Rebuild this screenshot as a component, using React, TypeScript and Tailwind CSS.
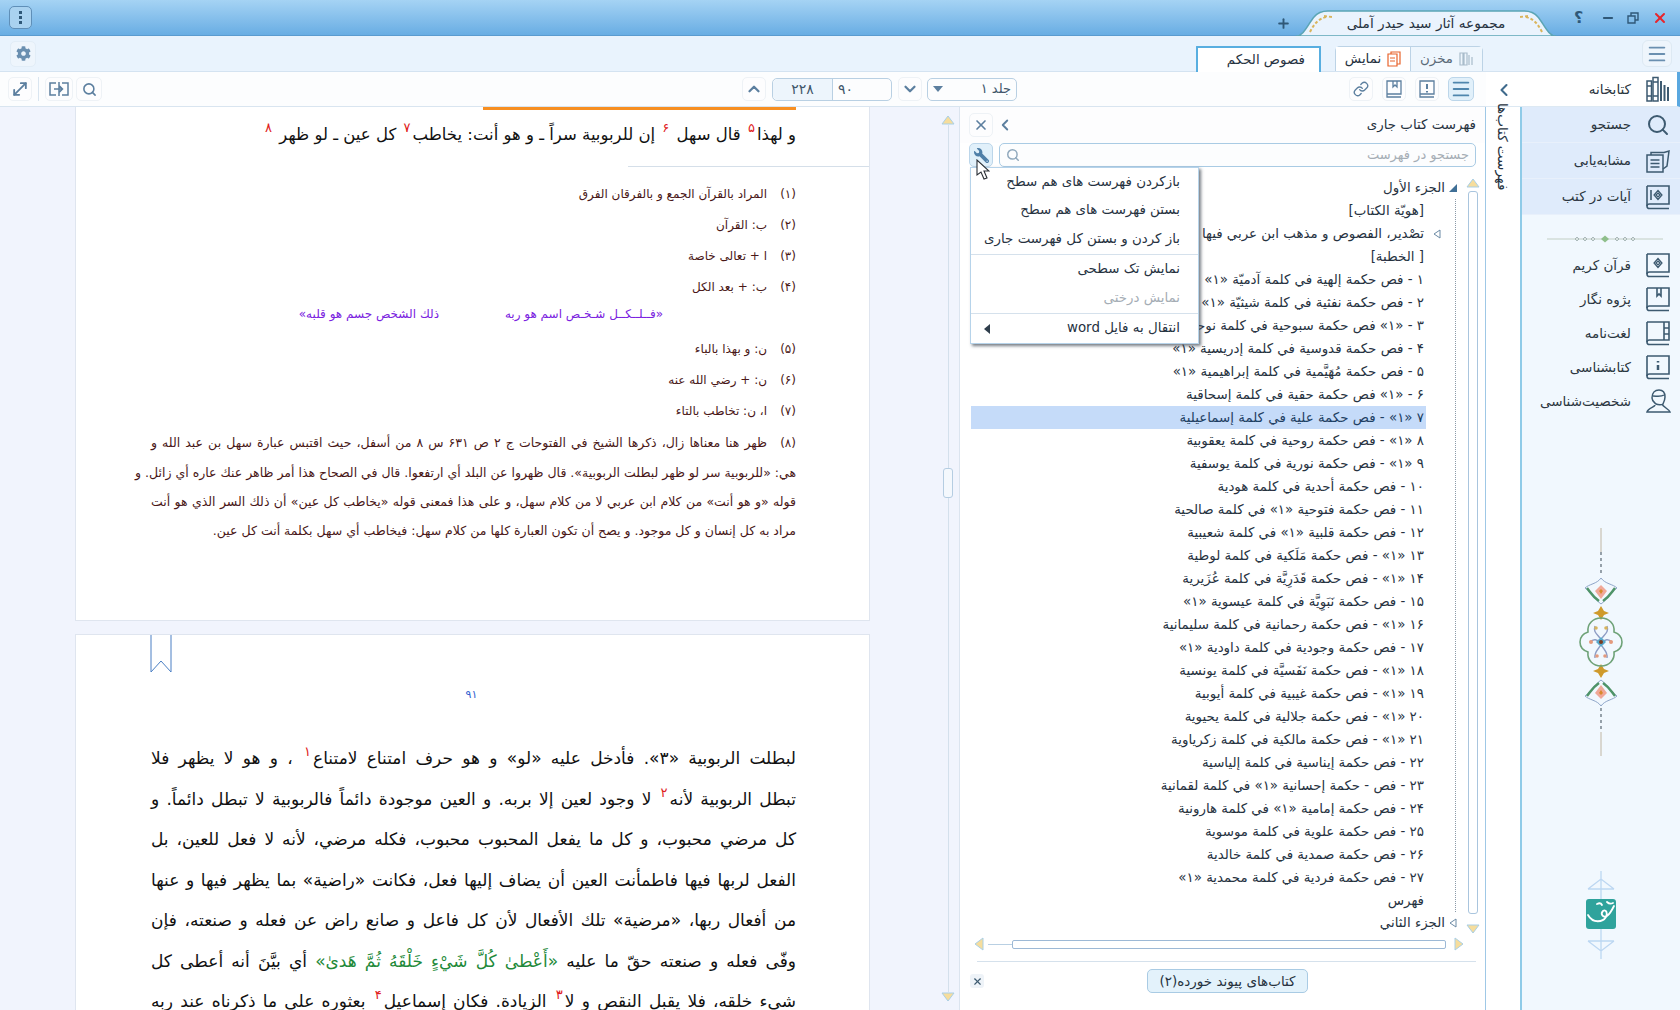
import * as React from "react";
import { ChevronLeft, ChevronUp, ChevronDown, Search, MoveDiagonal, Link, X, Plus, Menu, Minus } from "lucide-react";
import { FaCog, FaWrench } from "react-icons/fa";

const INK = "#5c7f9f";
const NAV = "#3d5a70";

const tree = [
  "۱ - فص حكمة إلهية في كلمة آدميّة «۱»",
  "۲ - فص حكمة نفثية في كلمة شيثيّة «۱»",
  "۳ - «۱» فص حكمة سبوحية في كلمة نوحية",
  "۴ - فص حكمة قدوسية في كلمة إدريسية «۱»",
  "۵ - فص حكمة مُهَيَّمية في كلمة إبراهيمية «۱»",
  "۶ - «۱» فص حكمة حقية في كلمة إسحاقية",
  "۷ «۱» - فص حكمة علية في كلمة إسماعيلية",
  "۸ «۱» - فص حكمة روحية في كلمة يعقوبية",
  "۹ «۱» - فص حكمة نورية في كلمة يوسفية",
  "۱۰ - فص حكمة أحدية في كلمة هودية",
  "۱۱ - فص حكمة فتوحية «۱» في كلمة صالحية",
  "۱۲ - فص حكمة قلبية «۱» في كلمة شعيبية",
  "۱۳ «۱» - فص حكمة مَلَكية في كلمة لوطية",
  "۱۴ «۱» - فص حكمة قَدَرِيَّة في كلمة عُزَيرية",
  "۱۵ - فص حكمة نَبَوِيَّة في كلمة عيسوية «۱»",
  "۱۶ «۱» - فص حكمة رحمانية في كلمة سليمانية",
  "۱۷ - فص حكمة وجودية في كلمة داودية «۱»",
  "۱۸ «۱» - فص حكمة نَفَسيَّة في كلمة يونسية",
  "۱۹ «۱» - فص حكمة غيبية في كلمة أيوبية",
  "۲۰ «۱» - فص حكمة جلالية في كلمة يحيوية",
  "۲۱ «۱» - فص حكمة مالكية في كلمة زكرياوية",
  "۲۲ - فص حكمة إيناسية في كلمة إلياسية",
  "۲۳ - فص - حكمة إحسانية «۱» في كلمة لقمانية",
  "۲۴ - فص حكمة إمامية «۱» في كلمة هارونية",
  "۲۵ - فص حكمة علوية في كلمة موسوية",
  "۲۶ - فص حكمة صمدية في كلمة خالدية",
  "۲۷ - فص حكمة فردية في كلمة محمدية «۱»",
];

const notes = [
  ["(۱)", "المراد بالقرآن الجمع و بالفرقان الفرق"],
  ["(۲)", "ب: القرآن"],
  ["(۳)", "ا + تعالى خاصة"],
  ["(۴)", "ب: + بعد الكل"],
];
const notes2 = [
  ["(۵)", "ن: و بهذا بالباء"],
  ["(۶)", "ن: + رضي الله عنه"],
  ["(۷)", "ا، ن: تخاطب بالتاء"],
];

function Note({ children }: { children: React.ReactNode }) {
  return <sup className="text-[13px] text-[#e02020] mx-[2px] top-[-8px]">{children}</sup>;
}

function IconBtn({ children, active, className = "" }: { children: React.ReactNode; active?: boolean; className?: string }) {
  return (
    <div
      className={`flex h-[24px] w-[24px] items-center justify-center rounded-[5px] border ${
        active ? "border-[#bcd6ea] bg-[#e1f0fa]" : "border-[#eef2f6] bg-[#fdfdfe]"
      } ${className}`}
    >
      {children}
    </div>
  );
}

function Arrow({ dir, className = "" }: { dir: "up" | "down" | "left" | "right"; className?: string }) {
  const rot = { up: 0, down: 180, left: 270, right: 90 }[dir];
  return (
    <svg width="14" height="10" viewBox="0 0 14 10" className={className} style={{ transform: `rotate(${rot}deg)` }}>
      <path d="M7 1 13 9H1z" fill="#f6dd9c" stroke="#a9cfe6" strokeWidth="1" />
    </svg>
  );
}

function Book({ children, size = 26 }: { children?: React.ReactNode; size?: number }) {
  return (
    <svg width={size} height={size} viewBox="0 0 26 26" fill="none" stroke={NAV} strokeWidth="1.6">
      <path d="M2 2h22v18H4.500C3 20 2 21 2 22.200S3 24.500 4.500 24.500H24" />
      <path d="M2 2v20" />
      {children}
    </svg>
  );
}

function LibraryIcon({ size = 26 }: { size?: number }) {
  return (
    <svg width={size} height={size} viewBox="0 0 26 26" fill="none" stroke={NAV} strokeWidth="1.5">
      <rect x="2" y="5" width="4.500" height="20" />
      <rect x="8" y="1.500" width="5" height="23.500" />
      <path d="M2 10h4.500M8 6h5M8 20h5M2 20h4.500" />
      <path d="M16 5v20M19.500 9v16M23 11v14" strokeWidth="2" />
    </svg>
  );
}

function DocsIcon() {
  return (
    <svg width="26" height="26" viewBox="0 0 26 26" fill="none" stroke={NAV} strokeWidth="1.5">
      <path d="M2 7h16v17H2z" />
      <path d="M6 7V4.500h13L24 3l-2 15-4 3" />
      <path d="M5.500 12h9M5.500 15.500h9M5.500 19h9" />
    </svg>
  );
}

function PersonIcon() {
  return (
    <svg width="26" height="26" viewBox="0 0 26 26" fill="none" stroke={NAV} strokeWidth="1.5">
      <path d="M7 10c0-5 3-8 7-8s6 3 6 7c0 2-1 5-2 7-1 1-5 1-7 0-2-2-4-3-4-6z" />
      <path d="M8 8c4 0 8 1 11-1" />
      <path d="M10 17c0 2-7 3-8 7h23c-1-3-7-5-8-8" />
    </svg>
  );
}

function Diamond() {
  return <path d="M13 6.500 17 11l-4 4.500L9 11z M13 9l2 2-2 2-2-2z" strokeWidth="1.2" />;
}

function NavRow({ label, icon, shaded }: { label: string; icon: React.ReactNode; shaded?: boolean }) {
  return (
    <div className={`flex items-center justify-end ${shaded ? "h-[36px] bg-[#dfebfb] border-b border-[#e8f0fb]" : "h-[34px]"}`}>
      <span dir="rtl" className="text-[13.500px] text-[#2b3640] whitespace-nowrap">
        {label}
      </span>
      <div className="ml-[14px] mr-[9px] flex w-[26px] justify-center">{icon}</div>
    </div>
  );
}

function HOrnament() {
  return (
    <svg width="116" height="10" viewBox="0 0 116 10">
      <path d="M0 5h116" stroke="#c2cfc4" strokeWidth="1" />
      <path d="M58 1.500 62 5l-4 3.500L54 5z" fill="#8fbf8c" />
      {[30, 38, 46, 70, 78, 86].map((x) => (
        <path key={x} d={`M${x} 3 ${x + 2} 5 ${x} 7 ${x - 2} 5z`} fill="none" stroke="#9aa" strokeWidth=".8" />
      ))}
    </svg>
  );
}

function VOrnament() {
  const Flower = ({ y, flip }: { y: number; flip?: boolean }) => (
    <g transform={`translate(23 ${y}) scale(1 ${flip ? -1 : 1})`}>
      <path d="M0-16 C4-10 12-10 16-6 C10-2 8 4 0 10 C-8 4 -10-2 -16-6 C-12-10 -4-10 0-16z" fill="none" stroke="#8fa6c9" strokeWidth="1" />
      <path d="M-14-6c4 5 6 9 12 13M14-6c-4 5-6 9-12 13" fill="none" stroke="#4f9468" strokeWidth="2.500" />
      <path d="M0-9 6-3 0 5-6-3z" fill="#f0a898" />
      <path d="M0-5 2-3 0 0-2-3z" fill="#d98a2b" />
    </g>
  );
  return (
    <svg width="46" height="228" viewBox="0 0 46 228">
      <path d="M23 0v24M23 204v24" stroke="#b5a48e" strokeWidth=".8" />
      <path d="M23 24v24M23 180v24" stroke="#6f7c86" strokeWidth="1.400" strokeDasharray="3 3" />
      <Flower y={66} />
      <Flower y={162} flip />
      <path d="M23 78l3 5 5 2-5 2-3 5-3-5-5-2 5-2zM23 136l3 5 5 2-5 2-3 5-3-5-5-2 5-2z" fill="#cf9a2b" />
      <path d="M23 90c8 0 14 6 13 14 6 2 8 6 8 10s-2 8-8 10c1 8-5 14-13 14s-14-6-13-14c-6-2-8-6-8-10s2-8 8-10c-1-8 5-14 13-14z" fill="none" stroke="#6ea277" strokeWidth="1.600" />
      <path d="M17 98c-2 6 2 8 5 12M29 98c2 6-2 8-5 12M12 114c4-4 7-2 10 0M34 114c-4-4-7-2-10 0M17 130c-1-6 3-8 5-12M29 130c1-6-3-8-5-12" fill="none" stroke="#8d9cc4" strokeWidth="1.400" />
      <path d="M23 109l5 5-5 5-5-5z" fill="#58a9cc" />
      <circle cx="23" cy="114" r="2" fill="#7a3b20" />
      <circle cx="13" cy="114" r="2" fill="#e49a7c" />
      <circle cx="33" cy="114" r="2" fill="#e49a7c" />
      <circle cx="18" cy="100" r="1.800" fill="#d8b45c" />
      <circle cx="28" cy="100" r="1.800" fill="#d8b45c" />
      <circle cx="19" cy="128" r="1.800" fill="#e49a7c" />
      <circle cx="27" cy="128" r="1.800" fill="#e49a7c" />
    </svg>
  );
}

function Logo() {
  return (
    <svg width="46" height="92" viewBox="0 0 46 92">
      <path d="M23 2v88M10 20l13-10 13 10M10 72l13 10 13-10M10 20h26M10 72h26" fill="none" stroke="#bcd7f2" strokeWidth="1.300" />
      <rect x="8" y="30" width="30" height="30" rx="3" fill="#2fa39c" />
      <path d="M10 46c5 9 15 7 18 2 2-4 0-8-3-6-3 3 0 7 4 5 3-2 5-6 7-10M19 35c2-1 4-1 5 1M29 33c2 2 4 2 6 1" fill="none" stroke="#fff" strokeWidth="1.800" strokeLinecap="round" />
    </svg>
  );
}

function TitleTab() {
  return (
    <div className="relative flex h-[26px] w-[260px] items-center justify-center">
      <svg width="260" height="26" viewBox="0 0 260 26" className="absolute inset-0">
        <path d="M0 26C8 26 12 14 18 7 22 2 26 1 32 1H228c6 0 10 1 14 6 6 7 10 19 18 19z" fill="#eaf3fd" stroke="#5ba5b5" strokeWidth="1.500" />
        <path d="M14 22c4-8 8-13 16-15M28 6l8 1M246 22c-4-8-8-13-16-15M232 6l-8 1" fill="none" stroke="#d9b45c" strokeWidth="2" strokeDasharray="3 2" />
      </svg>
      <span dir="rtl" className="relative text-[13.700px] text-[#26323f]">
        مجموعه آثار سید حیدر آملی
      </span>
    </div>
  );
}

function TitleBar() {
  return (
    <div className="flex h-[36px] shrink-0 items-center bg-gradient-to-b from-[#a5d3f4] to-[#68ade3] border-b border-[#5a9bcf]">
      <div className="ml-[9px] flex h-[23px] w-[23px] flex-col items-center justify-center gap-[2px] rounded-[5px] border border-[#5f8fb8] bg-[#a9d2f0]">
        <span className="h-[3px] w-[3px] bg-[#2f5878]" />
        <span className="h-[3px] w-[3px] bg-[#2f5878]" />
        <span className="h-[3px] w-[3px] bg-[#2f5878]" />
      </div>
      <div className="flex flex-1 items-end justify-end self-end">
        <Plus size={15} strokeWidth={3} className="mb-[4px] mr-[5px] text-[#2f5878]" />
      </div>
      <div className="self-end mb-[-1px]">
        <TitleTab />
      </div>
      <div className="flex w-[124px] items-center text-[#2f5878] pl-[18px]">
        <span className="w-[27px] text-[16px] font-bold">؟</span>
        <Minus size={14} strokeWidth={3.500} className="mr-[12px]" />
        <svg width="12" height="12" viewBox="0 0 12 12" fill="none" stroke="#2f5878" strokeWidth="1.400" className="mr-[13px]">
          <path d="M1 4h7v7H1zM4 4V1h7v7H8" />
        </svg>
        <X size={16} strokeWidth={3} className="text-[#e8252c]" />
      </div>
    </div>
  );
}

function TabsRow() {
  return (
    <div className="flex h-[36px] shrink-0 items-end bg-[#e9f3fd] border-b border-[#d4e3f1]">
      <div className="flex h-full items-center pl-[10px]">
        <div className="flex h-[26px] w-[26px] items-center justify-center rounded-[5px] border border-[#e2edf7] bg-[#eef5fc]">
          <FaCog size={15} className="text-[#6a8fb0]" />
        </div>
      </div>
      <div className="flex flex-1 justify-end mb-[-1px]">
        <div dir="rtl" className="flex h-[26px] w-[125px] items-center rounded-t-[1px] border-x-2 border-t-2 border-[#58aee0] bg-white pr-[14px] text-[13.400px] text-[#26323f]">
          فصوص الحکم
        </div>
        <div className="ml-[14px] flex h-[25px] w-[148px] rounded-t-[5px] border border-b-0 border-[#bcd3e6] text-[13.400px]">
          <div className="flex w-[74px] items-center justify-center gap-[6px] bg-white">
            <span dir="rtl" className="text-[#26323f]">نمایش</span>
            <svg width="14" height="16" viewBox="0 0 14 16" fill="none" stroke="#e8632b" strokeWidth="1.200">
              <path d="M1 3h9v12H1zM4 3V1h9v12h-3M3 7h5M3 10h5" />
            </svg>
          </div>
          <div className="flex flex-1 items-center justify-center gap-[6px] border-l border-[#bcd3e6] bg-[#eef6fd]">
            <span dir="rtl" className="text-[#5a6a78]">مخزن</span>
            <svg width="14" height="14" viewBox="0 0 14 14" fill="none" stroke="#a9bccb" strokeWidth="1.200">
              <path d="M1 1h3v12H1zM5 1h3v12H5zM10 3v10M13 5v8" />
            </svg>
          </div>
        </div>
        <div className="w-[159px]" />
      </div>
      <div className="flex h-full items-center pr-[8px]">
        <div className="flex h-[27px] w-[30px] items-center justify-center rounded-[6px] border border-[#dde9f3] bg-[#eef5fc]">
          <Menu size={22} strokeWidth={2} className="text-[#6a8fb0]" />
        </div>
      </div>
    </div>
  );
}

function BookTool({ kind, size = 18 }: { kind: "mark" | "bang"; size?: number }) {
  return (
    <svg width={size} height={size} viewBox="0 0 18 18" fill="none" stroke={INK} strokeWidth="1.300">
      <path d="M2 1h14v13H2zM2 14v3h14" />
      {kind === "mark" ? <path d="M8 1v6l2-2 2 2V1" /> : <path d="M9 4v5M9 11v1.500" strokeWidth="2" />}
    </svg>
  );
}

function ToolRow() {
  return (
    <div className="flex h-[35px] w-[1486px] shrink-0 items-center border-b border-[#d9e5f0] bg-[#fcfdfe]">
      <div className="flex items-center pl-[8px]">
        <IconBtn><MoveDiagonal size={20} strokeWidth={2.200} style={{ color: INK }} /></IconBtn>
        <div className="mx-[6px] h-[24px] w-px bg-[#d9e5f0]" />
        <IconBtn className="w-[28px]">
          <svg width="20" height="14" viewBox="0 0 20 14" fill="none" stroke={INK} strokeWidth="1.500">
            <path d="M7 1H1v12h6M13 1h6v12h-6M10 0v14M5 7h8M10.500 4l3 3-3 3" />
          </svg>
        </IconBtn>
        <IconBtn className="ml-[3px] w-[26px]"><Search size={15} strokeWidth={2.500} style={{ color: INK }} /></IconBtn>
      </div>
      <div className="flex-1" />
      <div className="flex items-center">
        <IconBtn><ChevronUp size={18} strokeWidth={3} style={{ color: INK }} /></IconBtn>
        <div className="mx-[6px] flex h-[23px] w-[120px] rounded-[5px] border border-[#b9d0e3] text-[14px] text-[#40566a]">
          <div className="flex w-[60px] items-center justify-center rounded-l-[5px] bg-[#edf5fc] border-r border-[#b9d0e3]">۲۲۸</div>
          <div className="flex flex-1 items-center pl-[5px]">۹۰</div>
        </div>
        <IconBtn><ChevronDown size={18} strokeWidth={3} style={{ color: INK }} /></IconBtn>
        <div className="ml-[5px] flex h-[23px] w-[90px] items-center justify-between rounded-[5px] border border-[#b9d0e3] px-[5px] text-[13px] text-[#40566a]">
          <svg width="10" height="6" viewBox="0 0 10 6"><path d="M0 0h10L5 6z" fill={INK} /></svg>
          <span dir="rtl">جلد ۱</span>
        </div>
      </div>
      <div className="w-[332px]" />
      <div className="flex items-center gap-[9px] pr-[12px]">
        <IconBtn><Link size={16} strokeWidth={2} style={{ color: INK }} /></IconBtn>
        <IconBtn><BookTool kind="mark" /></IconBtn>
        <IconBtn><BookTool kind="bang" /></IconBtn>
        <IconBtn active className="w-[26px]"><Menu size={22} strokeWidth={2} style={{ color: "#4f86ad" }} /></IconBtn>
      </div>
    </div>
  );
}

const bodyLine = "h-[40.500px] leading-[40px] whitespace-nowrap [text-align-last:justify]";

function Reader() {
  return (
    <div className="flex w-[960px] shrink-0 overflow-hidden bg-[#f1f4fd] border-r border-[#dbe4ef]">
      <div className="ml-[75px] flex w-[795px] shrink-0 flex-col">
        <div dir="rtl" className="h-[514px] shrink-0 overflow-hidden border-x border-b border-[#dfe5ef] bg-white">
          <div className="mr-[73px] h-[3px] w-[313px] bg-[#f78f22]" />
          <div className="mr-[73px] flex h-[50px] items-center whitespace-nowrap text-[16.500px] text-[#111]">
            <span>
              و لهذا<Note>۵</Note> قال سهل <Note>۶</Note> إن للربوبية سراً ـ و هو أنت: يخاطب<Note>۷</Note> كل عين ـ لو ظهر <Note>۸</Note>
            </span>
          </div>
          <div className="mt-[6px] mr-0 h-px w-[241px] bg-[#d5dfe9]" />
          <div className="mr-[73px] mt-[11px] text-[12px] text-[#4a1818]">
            {notes.map(([n, t]) => (
              <div key={n} className="flex h-[31px] items-center whitespace-nowrap">
                <span className="w-[29px]">{n}</span>
                <span>{t}</span>
              </div>
            ))}
            <div className="flex h-[23px] items-center whitespace-nowrap pr-[133px] text-[#7a22e0]">
              <span className="w-[156px]">«فــلــكــل شـخـص اسم هو ربه</span>
              <span className="mr-[68px]">ذلك الشخص جسم هو قلبه»</span>
            </div>
            <div className="h-[8px]" />
            {notes2.map(([n, t]) => (
              <div key={n} className="flex h-[31px] items-center whitespace-nowrap">
                <span className="w-[29px]">{n}</span>
                <span>{t}</span>
              </div>
            ))}
            <div className="mt-[2px] w-[645px] text-[12.500px]">
              <div className="flex h-[30px] items-center whitespace-nowrap [text-align-last:justify]">
                <span className="w-[29px] text-[12px]">(۸)</span>
                <span className="flex-1">ظهر هنا معناها زال، ذكرها الشيخ في الفتوحات ج ۲ ص ۶۳۱ س ۸ من أسفل، حيث اقتبس عبارة سهل بن عبد الله و</span>
              </div>
              <div className="h-[29px] leading-[29px] whitespace-nowrap [text-align-last:justify]">هي: «للربوبية سر لو ظهر لبطلت الربوبية». قال ظهروا عن البلد أي ارتفعوا. قال في الصحاح هذا أمر ظاهر عنك عاره أي زائل. و</div>
              <div className="h-[29px] leading-[29px] whitespace-nowrap [text-align-last:justify]">قوله «و هو أنت» من كلام ابن عربي لا من كلام سهل، و على هذا فمعنى قوله «يخاطب كل عين» أن ذلك السر الذي هو أنت</div>
              <div className="h-[29px] leading-[29px] whitespace-nowrap">مراد به كل إنسان و كل موجود. و يصح أن تكون العبارة كلها من كلام سهل: فيخاطب أي سهل بكلمة أنت كل عين.</div>
            </div>
          </div>
        </div>
        <div className="mt-[13px] flex-1 overflow-hidden border-x border-t border-[#dfe5ef] bg-white">
          <svg width="22" height="38" viewBox="0 0 22 38" className="ml-[74px]" fill="none" stroke="#4a7fc4" strokeWidth="1">
            <path d="M1 0v37L11 26l10 11V0" />
          </svg>
          <div className="mt-[12px] flex h-[20px] items-center justify-center text-[11px] text-[#3060d0] ml-[-2px]">۹۱</div>
          <div dir="rtl" className="ml-[75px] mt-[33px] w-[645px] text-[17px] text-[#111]">
            <div className={bodyLine}>لبطلت الربوبية «۳». فأدخل عليه «لو» و هو حرف امتناع لامتناع<Note>۱</Note> ، و هو لا يظهر فلا</div>
            <div className={bodyLine}>تبطل الربوبية لأنه<Note>۲</Note> لا وجود لعين إلا بربه. و العين موجودة دائماً فالربوبية لا تبطل دائماً. و</div>
            <div className={bodyLine}>كل مرضي محبوب، و كل ما يفعل المحبوب محبوب، فكله مرضي، لأنه لا فعل للعين، بل</div>
            <div className={bodyLine}>الفعل لربها فيها فاطمأنت العين أن يضاف إليها فعل، فكانت «راضية» بما يظهر فيها و عنها</div>
            <div className={bodyLine}>من أفعال ربها، «مرضية» تلك الأفعال لأن كل فاعل و صانع راض عن فعله و صنعته، فإن</div>
            <div className={bodyLine}>
              وفّى فعله و صنعته حقّ ما عليه <span className="text-[#1f8a3a]">«أَعْطىٰ كُلَّ شَيْءٍ خَلْقَهُ ثُمَّ هَدىٰ»</span> أي بيَّنَ أنه أعطى كل
            </div>
            <div className={bodyLine}>شيء خلقه، فلا يقبل النقص و لا<Note>۳</Note> الزيادة. فكان إسماعيل<Note>۴</Note> بعثوره على ما ذكرناه عند ربه</div>
          </div>
        </div>
      </div>
      <div className="ml-[71px] flex w-[14px] flex-col items-center pt-[8px]">
        <Arrow dir="up" />
        <div className="flex flex-1 w-full flex-col items-center">
          <div className="h-[343px] w-px bg-[#d4e0ec]" />
          <div className="h-[30px] w-[10px] rounded-[3px] border border-[#b5cde2] bg-[#f4f8fd]" />
          <div className="flex-1 w-px bg-[#d4e0ec]" />
        </div>
        <Arrow dir="down" className="mb-[8px]" />
      </div>
    </div>
  );
}

function TreeRow({ children, selected }: { children: React.ReactNode; selected?: boolean }) {
  return (
    <div
      dir="rtl"
      className={`h-[23px] w-[455px] overflow-hidden whitespace-nowrap pr-[2px] leading-[23px] ${selected ? "bg-[#c5dbf9] text-[#1e3f63]" : ""}`}
    >
      {children}
    </div>
  );
}

function Tree() {
  return (
    <div className="flex min-h-0 flex-1 pt-[10px]">
      <div className="ml-[11px] flex w-[495px] flex-col overflow-hidden text-[13.400px] text-[#26323f]">
        <div dir="rtl" className="flex h-[23px] items-center whitespace-nowrap pr-[7px]">
          <svg width="8" height="8" viewBox="0 0 8 8" className="ml-[4px]"><path d="M0 8h8V0z" fill="#3f6f96" /></svg>
          <span>الجزء الأول</span>
        </div>
        <div className="w-[485px] border-r border-dotted border-[#8b9aa8]">
          <TreeRow>[هويّة الكتاب]</TreeRow>
          <div className="flex">
            <TreeRow>تصْدير، الفصوص و مذهب ابن عربي فيها</TreeRow>
            <svg width="8" height="10" viewBox="0 0 8 10" className="ml-[7px] mt-[7px]"><path d="M7 1v8L1 5z" fill="#fff" stroke="#6b8aa5" /></svg>
          </div>
          <TreeRow>[ الخطبة]</TreeRow>
          {tree.map((t, i) => (
            <TreeRow key={t} selected={i === 6}>{t}</TreeRow>
          ))}
          <TreeRow>فهرس</TreeRow>
        </div>
        <div dir="rtl" className="flex h-[23px] items-center whitespace-nowrap pr-[7px]">
          <svg width="8" height="10" viewBox="0 0 8 10" className="ml-[4px]"><path d="M7 1v8L1 5z" fill="#fff" stroke="#6b8aa5" /></svg>
          <span>الجزء الثاني</span>
        </div>
      </div>
      <div className="flex w-[14px] flex-col items-center ml-[2px]">
        <Arrow dir="up" className="mt-[1px]" />
        <div className="mt-[3px] w-[10px] flex-1 rounded-[3px] border border-[#a9c5de]" />
        <Arrow dir="down" className="mt-[10px]" />
      </div>
      <div className="w-[5px]" />
    </div>
  );
}

function Popup() {
  const Item = ({ t, muted, first }: { t: string; muted?: boolean; first?: boolean }) => (
    <div dir="rtl" className={`flex ${first ? "h-[28px]" : "h-[29px]"} items-center pr-[18px] ${muted ? "text-[#a5adb5]" : "text-[#26323f]"}`}>
      {t}
    </div>
  );
  return (
    <div className="absolute left-[970px] top-[167px] z-10 flex w-[229px] flex-col border border-[#b6d3ea] bg-white text-[13.400px] whitespace-nowrap shadow-[2px_2px_3px_rgba(60,70,80,0.7)]">
      <Item first t="بازکردن فهرست های هم سطح" />
      <Item t="بستن فهرست های هم سطح" />
      <Item t="باز کردن و بستن کل فهرست جاری" />
      <div className="h-px bg-[#d5e1ec]" />
      <Item t="نمایش تک سطحی" />
      <Item t="نمایش درختی" muted />
      <div className="h-px bg-[#d5e1ec]" />
      <div className="flex h-[29px] items-center justify-between pl-[13px] pr-[18px] text-[#26323f]">
        <svg width="6" height="10" viewBox="0 0 6 10"><path d="M6 0v10L0 5z" fill="#2f3e4c" /></svg>
        <span dir="rtl">انتقال به فایل word</span>
      </div>
    </div>
  );
}

function Panel() {
  return (
    <div className="flex w-[526px] shrink-0 flex-col bg-white border-r border-[#9fc8e6] pb-[10px]">
      <div className="flex h-[36px] shrink-0 items-center pl-[9px] pr-[9px] bg-[#fdfdfe]">
        <IconBtn className="h-[22px] w-[23px]"><X size={16} strokeWidth={2.500} style={{ color: INK }} /></IconBtn>
        <ChevronLeft size={18} strokeWidth={2.500} className="ml-[3px]" style={{ color: INK }} />
        <span dir="rtl" className="ml-auto text-[13.400px] text-[#26323f]">فهرست کتاب جاری</span>
      </div>
      <div className="flex h-[24px] shrink-0 pl-[9px] pr-[9px]">
        <IconBtn active className="h-[23px] w-[23px]"><FaWrench size={15} className="-scale-x-100 text-[#4f7fa8]" /></IconBtn>
        <div className="ml-[6px] flex flex-1 items-center justify-between rounded-[5px] border border-[#a9cbe4] bg-[#fcfdfe] px-[6px]">
          <Search size={14} strokeWidth={2.500} style={{ color: "#8fa8bc" }} />
          <span dir="rtl" className="text-[13px] text-[#a5adb5]">جستجو در فهرست</span>
        </div>
      </div>
      <Tree />
      <div className="flex h-[20px] shrink-0 items-center pl-[12px]">
        <Arrow dir="left" />
        <div className="ml-[2px] h-px w-[24px] bg-[#b9d0e3]" />
        <div className="h-[9px] w-[434px] rounded-[2px] border border-[#9db9d6]" />
        <Arrow dir="right" className="ml-[6px]" />
      </div>
      <div className="ml-[17px] mt-[7px] h-px w-[499px] shrink-0 bg-[#d5e1ec]" />
      <div className="flex h-[38px] shrink-0 items-center pl-[10px]">
        <div className="flex h-[14px] w-[14px] items-center justify-center rounded-[3px] bg-[#eef3f8]"><X size={11} strokeWidth={2.500} className="text-[#3d5a70]" /></div>
        <div className="ml-[163px] flex h-[24px] w-[161px] items-center justify-center rounded-[5px] border border-[#a9cbe4] bg-[#e3f2fb] text-[13.500px] text-[#26323f]">
          <span dir="rtl">کتاب‌های پیوند خورده(۲)</span>
        </div>
      </div>
    </div>
  );
}

function Strip() {
  return (
    <div className="flex w-[34px] shrink-0 flex-col items-center bg-white">
      <div className="relative z-[5] mt-[-4px] mr-[1px] text-[13.500px] text-[#26323f] whitespace-nowrap [writing-mode:vertical-rl]" dir="rtl">
        فهرست کتاب‌ها
      </div>
    </div>
  );
}

function Sidebar() {
  return (
    <div className="flex w-[160px] shrink-0 flex-col border-l-2 border-[#8fcbe8] bg-[#f1f8fe]">
      <div className="relative ml-[-36px] flex h-[35px] items-center justify-end border-b border-[#dde9f3] border-r-[3px] border-r-[#5aa8e0] bg-white">
        <ChevronLeft size={20} strokeWidth={2.500} className="absolute left-[8px] top-[8px]" style={{ color: "#3f6a8c" }} />
        <span dir="rtl" className="text-[13.500px] text-[#2b3640]">کتابخانه</span>
        <div className="ml-[14px] mr-[6px] flex w-[26px] justify-center"><LibraryIcon /></div>
      </div>
      <NavRow shaded label="جستجو" icon={<Search size={24} strokeWidth={2} style={{ color: NAV }} />} />
      <NavRow shaded label="مشابه‌یابی" icon={<DocsIcon />} />
      <NavRow shaded label="آیات در کتب" icon={<Book><Diamond /><path d="M6 6v10" /></Book>} />
      <div className="flex h-[33px] items-center justify-center pl-[8px] pt-[14px]">
        <HOrnament />
      </div>
      <div className="flex flex-col">
        <NavRow label="قرآن کریم" icon={<Book><Diamond /></Book>} />
        <NavRow label="پژوه نگار" icon={<Book><path d="M12 2v8l2-2 2 2V2" /></Book>} />
        <NavRow label="لغت‌نامه" icon={<Book><path d="M19 2v18M19 8h5M19 14h5" /></Book>} />
        <NavRow label="کتابشناسی" icon={<Book><path d="M13 7v1.500M13 11v5" strokeWidth="2.500" /></Book>} />
        <NavRow label="شخصیت‌شناسی" icon={<PersonIcon />} />
      </div>
      <div className="mt-[110px] flex justify-center">
        <VOrnament />
      </div>
      <div className="mt-[113px] flex justify-center">
        <Logo />
      </div>
    </div>
  );
}

function Cursor() {
  return (
    <svg width="14" height="22" viewBox="0 0 14 22" className="absolute left-[976px] top-[159px] z-20">
      <path d="M1 1v15l4-3 3 7 3-1-3-7h5z" fill="#fff" stroke="#2a2f35" strokeWidth="1.100" />
    </svg>
  );
}

export default function App() {
  return (
    <div className="relative flex h-[1010px] w-[1680px] flex-col overflow-hidden bg-white font-['DejaVu_Sans',sans-serif]">
      <TitleBar />
      <TabsRow />
      <div className="flex min-h-0 flex-1">
        <div className="flex w-[1520px] shrink-0 flex-col">
          <ToolRow />
          <div className="flex min-h-0 flex-1">
            <Reader />
            <Panel />
            <Strip />
          </div>
        </div>
        <Sidebar />
      </div>
      <Popup />
      <Cursor />
    </div>
  );
}
